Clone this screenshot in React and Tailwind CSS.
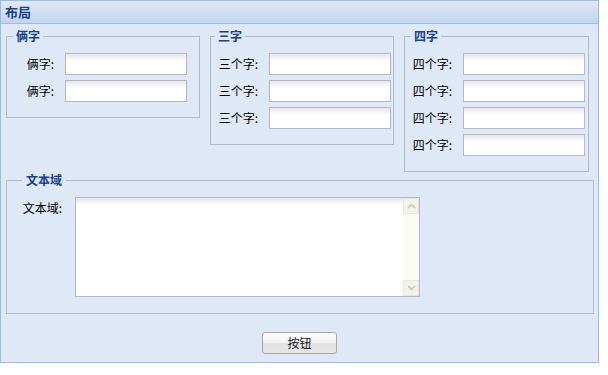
import React from "react";

const font = { fontFamily: '"Noto Sans CJK SC", "Liberation Sans", sans-serif' };

function Field({ label }) {
  return (
    <div className="flex h-[22px] items-center">
      <label className="w-[49px] whitespace-nowrap pr-[2px] text-right text-[12px] leading-[14px] text-black">
        {label}:
      </label>
      <input
        type="text"
        className="ml-[9px] h-[22px] w-[122px] border border-[#b5b8c8] bg-[linear-gradient(to_bottom,#e6e6e6,#ffffff_7px)] px-1 text-[12px] outline-none"
      />
    </div>
  );
}

function Group({ title, width, legendMl, labels }) {
  return (
    <fieldset className={`mt-[5px] border border-[#b5b8c8] ${width}`}>
      <legend
        className={`${legendMl} px-[3px] text-[12px] font-bold leading-[14px] text-[#15428b]`}
      >
        {title}
      </legend>
      <div className="flex flex-col gap-[5px] pb-[15px] pt-[10px]">
        {labels.map((l, i) => (
          <Field key={i} label={l} />
        ))}
      </div>
    </fieldset>
  );
}

function Chevron({ up }) {
  return (
    <svg width="9" height="6" viewBox="0 0 9 6">
      <polyline
        points={up ? "1,5 4.5,1.5 8,5" : "1,1 4.5,4.5 8,1"}
        fill="none"
        stroke="#c9c7b8"
        strokeWidth="1.6"
      />
    </svg>
  );
}

export default function App() {
  return (
    <div className="h-[375px] w-[608px] bg-white" style={font}>
      <div className="flex h-[363px] w-[599px] flex-col border border-[#99bbe8] bg-[#dfe8f6]">
        <div className="flex h-[23px] items-center border-b border-[#99bbe8] bg-[linear-gradient(to_bottom,#e0e9f6,#c1d5ef)] pl-[4px]">
          <span className="text-[13px] font-bold leading-[14px] text-[#15428b]">布局</span>
        </div>

        <div className="flex flex-1 flex-col px-[5px]">
          <div className="flex items-start gap-[10px]">
            <Group title="俩字" width="w-[194px]" legendMl="ml-[6px]" labels={["俩字", "俩字"]} />
            <Group
              title="三字"
              width="w-[184px]"
              legendMl="ml-[4px]"
              labels={["三个字", "三个字", "三个字"]}
            />
            <Group
              title="四字"
              width="w-[185px]"
              legendMl="ml-[6px]"
              labels={["四个字", "四个字", "四个字", "四个字"]}
            />
          </div>

          <fieldset className="mt-[1px] w-[588px] border border-[#b5b8c8]">
            <legend className="ml-[15px] px-[4px] text-[12px] font-bold leading-[14px] text-[#15428b]">
              文本域
            </legend>
            <div className="flex pb-[16px] pt-[10px]">
              <label className="w-[57px] whitespace-nowrap pr-[2px] pt-[4px] text-right text-[12px] leading-[14px] text-black">
                文本域:
              </label>
              <div className="ml-[11px] flex h-[100px] w-[345px] border border-[#b5b8c8]">
                <textarea className="h-full flex-1 resize-none bg-[linear-gradient(to_bottom,#e6e6e6,#ffffff_7px)] px-1 text-[12px] outline-none" />
                <div className="flex w-[16px] flex-col justify-between bg-[#fbfbf3]">
                  <div className="flex h-[16px] items-center justify-center border border-[#e8e6d8] bg-[#f3f2ea]">
                    <Chevron up />
                  </div>
                  <div className="flex h-[16px] items-center justify-center border border-[#e8e6d8] bg-[#f3f2ea]">
                    <Chevron />
                  </div>
                </div>
              </div>
            </div>
          </fieldset>

          <div className="mt-[18px] flex justify-center">
            <button className="h-[22px] w-[75px] rounded-[3px] border border-[#a8a8a8] bg-[linear-gradient(to_bottom,#fdfdfd_0%,#f1f1f1_50%,#e2e2e2_50%,#e6e6e6_100%)] text-[12px] leading-[14px] text-[#222]">
              按钮
            </button>
          </div>
        </div>
      </div>
    </div>
  );
}
